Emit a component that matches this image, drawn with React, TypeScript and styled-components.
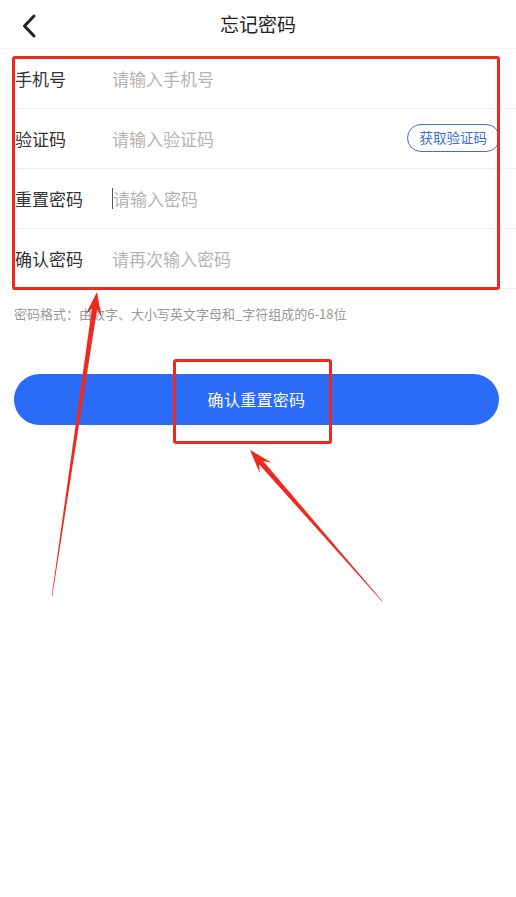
import React from "react";
import styled, { createGlobalStyle } from "styled-components";

const GlobalStyle = createGlobalStyle`
  * { box-sizing: border-box; }
  html, body { margin: 0; padding: 0; background: #fff; }
  body {
    font-family: "Noto Sans CJK SC", "Noto Sans", "Liberation Sans", sans-serif;
    -webkit-font-smoothing: antialiased;
  }
`;

const Page = styled.div`
  position: relative;
  width: 516px;
  min-height: 897px;
  background: #fff;
`;

const Header = styled.header`
  position: relative;
  height: 49px;
  display: flex;
  align-items: center;
  justify-content: center;
  border-bottom: 1px solid #f1f1f1;
`;

const BackButton = styled.button`
  position: absolute;
  left: 16px;
  top: 11px;
  width: 26px;
  height: 30px;
  border: 0;
  padding: 0;
  background: transparent;
  display: flex;
  align-items: center;
  justify-content: center;
`;

const Title = styled.h1`
  margin: 0;
  font-size: 19px;
  font-weight: 400;
  color: #222;
  line-height: 1;
  margin-top: -2px;
`;

const Form = styled.div`
  display: flex;
  flex-direction: column;
  padding-left: 14px;
`;

const Row = styled.div`
  height: 60px;
  display: flex;
  align-items: center;
  border-bottom: 1px solid #f0f0f0;
  padding-right: 16px;
  padding-bottom: 1px;
`;

const Label = styled.span`
  width: 97px;
  flex: none;
  font-size: 17px;
  color: #333;
  line-height: 1;
  margin-left: 1px;
`;

const Caret = styled.span`
  width: 1px;
  height: 21px;
  background: #555;
  flex: none;
`;

const Input = styled.input`
  flex: 1;
  min-width: 0;
  border: 0;
  outline: none;
  padding: 0;
  background: transparent;
  font-family: inherit;
  font-size: 17px;
  color: #333;
  &::placeholder { color: #b4b4b4; }
`;

const CodeButton = styled.button`
  flex: none;
  height: 28px;
  padding: 0 12px;
  border: 1px solid #3d6fd9;
  border-radius: 14px;
  background: #fff;
  color: #3d6fd9;
  font-family: inherit;
  font-size: 13.5px;
  line-height: 1;
`;

const Hint = styled.p`
  margin: 16px 0 0 14px;
  font-size: 13px;
  color: #999;
  line-height: 18px;
`;

const SubmitButton = styled.button`
  display: block;
  margin: 51px 0 0 14px;
  width: 485px;
  height: 51px;
  border: 0;
  border-radius: 26px;
  background: #2a6cf7;
  color: #fff;
  font-family: inherit;
  font-size: 16px;
  letter-spacing: 0.3px;
  padding-bottom: 2px;
`;

const MarkBox = styled.div<{ $l: number; $t: number; $w: number; $h: number }>`
  position: absolute;
  left: ${(p) => p.$l}px;
  top: ${(p) => p.$t}px;
  width: ${(p) => p.$w}px;
  height: ${(p) => p.$h}px;
  border: 3px solid #ee2a20;
  border-radius: 3px;
  pointer-events: none;
`;

const Overlay = styled.svg`
  position: absolute;
  left: 0;
  top: 0;
  width: 516px;
  height: 897px;
  pointer-events: none;
`;

function arrowPoints(tx: number, ty: number, hx: number, hy: number) {
  const dx = hx - tx;
  const dy = hy - ty;
  const len = Math.hypot(dx, dy);
  const ux = dx / len;
  const uy = dy / len;
  const nx = -uy;
  const ny = ux;
  const headLen = 24;
  const notch = 17;
  const wing = 8;
  const bx = hx - ux * headLen;
  const by = hy - uy * headLen;
  const sx = hx - ux * notch;
  const sy = hy - uy * notch;
  const p = (x: number, y: number) => `${x.toFixed(1)},${y.toFixed(1)}`;
  return [
    p(tx + nx * 0.3, ty + ny * 0.3),
    p(sx + nx * 2.6, sy + ny * 2.6),
    p(bx + nx * wing, by + ny * wing),
    p(hx, hy),
    p(bx - nx * wing, by - ny * wing),
    p(sx - nx * 2.6, sy - ny * 2.6),
    p(tx - nx * 0.3, ty - ny * 0.3),
  ].join(" ");
}

const fields = [
  { label: "手机号", placeholder: "请输入手机号" },
  { label: "验证码", placeholder: "请输入验证码", code: true },
  { label: "重置密码", placeholder: "请输入密码", caret: true },
  { label: "确认密码", placeholder: "请再次输入密码" },
];

export default function App() {
  return (
    <Page>
      <GlobalStyle />
      <Header>
        <BackButton aria-label="返回">
          <svg width="16" height="24" viewBox="0 0 16 24">
            <path d="M13 2 L3.5 12 L13 22" fill="none" stroke="#222" strokeWidth="3" strokeLinecap="round" strokeLinejoin="round" />
          </svg>
        </BackButton>
        <Title>忘记密码</Title>
      </Header>
      <Form>
        {fields.map((f) => (
          <Row key={f.label}>
            <Label>{f.label}</Label>
            {f.caret && <Caret />}
            <Input placeholder={f.placeholder} />
            {f.code && <CodeButton>获取验证码</CodeButton>}
          </Row>
        ))}
      </Form>
      <Hint>密码格式：由数字、大小写英文字母和_字符组成的6-18位</Hint>
      <SubmitButton>确认重置密码</SubmitButton>

      <MarkBox $l={12} $t={56} $w={488} $h={234} />
      <MarkBox $l={173} $t={359} $w={159} $h={85} />
      <Overlay viewBox="0 0 516 897">
        <polygon points={arrowPoints(52, 596, 97, 292)} fill="#ee2a20" />
        <polygon points={arrowPoints(382, 601, 250, 450)} fill="#ee2a20" />
      </Overlay>
    </Page>
  );
}
